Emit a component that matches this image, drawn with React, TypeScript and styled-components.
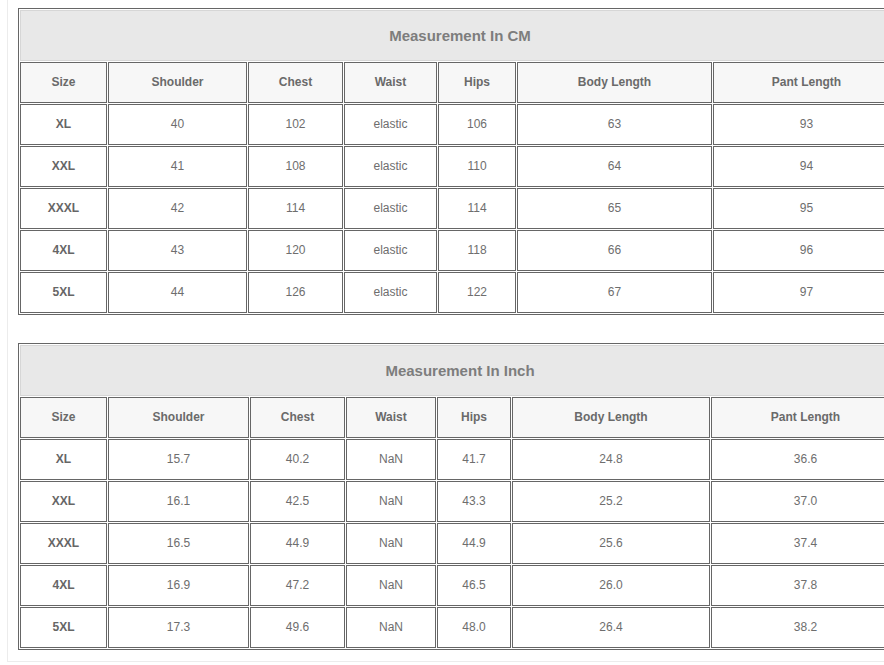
import React from 'react';
import styled, { createGlobalStyle } from 'styled-components';

const GlobalStyle = createGlobalStyle`
  html, body {
    margin: 0;
    padding: 0;
    background: #fff;
  }
  body {
    font-family: "Liberation Sans", Arial, sans-serif;
  }
`;

const Viewport = styled.div`
  width: 884px;
  height: 665px;
  overflow: hidden;
`;

const Container = styled.div`
  margin-left: 7px;
  width: 920px;
  padding: 8px 10px 11px 10px;
  border: 1px solid #ececec;
  border-top: none;
`;

const Table = styled.table<{ $gap?: number }>`
  width: 884px;
  table-layout: fixed;
  border-collapse: separate;
  border-spacing: 1px;
  border: 1px solid #666;
  margin-bottom: ${({ $gap }) => ($gap ? `${$gap}px` : '0')};
`;

const Col = styled.col<{ $w: number }>`
  width: ${({ $w }) => $w}px;
`;

const TitleCell = styled.th`
  height: 51px;
  box-sizing: border-box;
  background: #e8e8e8;
  border: 1px solid #d6d6d6;
  color: #7d7d7d;
  font-size: 15px;
  font-weight: bold;
  text-align: center;
  vertical-align: middle;
  padding: 0 0 1px;
`;

const HeadCell = styled.th`
  height: 41px;
  box-sizing: border-box;
  background: #f7f7f7;
  border: 1px solid #666;
  color: #6a6a6a;
  font-size: 12px;
  font-weight: bold;
  text-align: center;
  vertical-align: middle;
  padding: 0 0 2px;
`;

const Cell = styled.td<{ $bold?: boolean }>`
  height: 41px;
  box-sizing: border-box;
  background: #fff;
  border: 1px solid #666;
  color: ${({ $bold }) => ($bold ? '#666' : '#6e6e6e')};
  font-size: 12px;
  font-weight: ${({ $bold }) => ($bold ? 'bold' : 'normal')};
  text-align: center;
  vertical-align: middle;
  padding: 0 0 2px;
`;

const headers = ['Size', 'Shoulder', 'Chest', 'Waist', 'Hips', 'Body Length', 'Pant Length'];

const cmRows = [
  ['XL', '40', '102', 'elastic', '106', '63', '93'],
  ['XXL', '41', '108', 'elastic', '110', '64', '94'],
  ['XXXL', '42', '114', 'elastic', '114', '65', '95'],
  ['4XL', '43', '120', 'elastic', '118', '66', '96'],
  ['5XL', '44', '126', 'elastic', '122', '67', '97'],
];

const inchRows = [
  ['XL', '15.7', '40.2', 'NaN', '41.7', '24.8', '36.6'],
  ['XXL', '16.1', '42.5', 'NaN', '43.3', '25.2', '37.0'],
  ['XXXL', '16.5', '44.9', 'NaN', '44.9', '25.6', '37.4'],
  ['4XL', '16.9', '47.2', 'NaN', '46.5', '26.0', '37.8'],
  ['5XL', '17.3', '49.6', 'NaN', '48.0', '26.4', '38.2'],
];

type SizeTableProps = {
  title: string;
  widths: number[];
  rows: string[][];
  gap?: number;
};

const SizeTable = ({ title, widths, rows, gap }: SizeTableProps) => (
  <Table $gap={gap}>
    <colgroup>
      {widths.map((w, i) => (
        <Col key={i} $w={w} />
      ))}
    </colgroup>
    <tbody>
      <tr>
        <TitleCell colSpan={7}>{title}</TitleCell>
      </tr>
      <tr>
        {headers.map((h) => (
          <HeadCell key={h}>{h}</HeadCell>
        ))}
      </tr>
      {rows.map((row) => (
        <tr key={row[0]}>
          {row.map((v, i) => (
            <Cell key={i} $bold={i === 0}>
              {v}
            </Cell>
          ))}
        </tr>
      ))}
    </tbody>
  </Table>
);

const App = () => (
  <Viewport>
    <GlobalStyle />
    <Container>
      <SizeTable
        title="Measurement In CM"
        widths={[87, 139, 95, 93, 78, 195, 187]}
        rows={cmRows}
        gap={28}
      />
      <SizeTable
        title="Measurement In Inch"
        widths={[87, 141, 95, 90, 74, 198, 189]}
        rows={inchRows}
      />
    </Container>
  </Viewport>
);

export default App;
